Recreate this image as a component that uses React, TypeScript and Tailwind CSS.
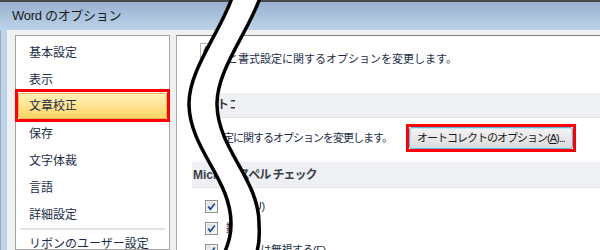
const jp = "font-['Liberation_Sans','Noto_Sans_CJK_JP',sans-serif]";

const items = ["基本設定", "表示", "文章校正", "保存", "文字体裁", "言語", "詳細設定"];

const Check = () => (
    <svg width="13" height="13" viewBox="0 0 13 13" className="shrink-0">
        <defs>
            <linearGradient id="cbg" x1="0" y1="0" x2="1" y2="1">
                <stop offset="0" stopColor="#dcdcdc" />
                <stop offset="1" stopColor="#fbfbfb" />
            </linearGradient>
        </defs>
        <rect x="0.5" y="0.5" width="12" height="12" fill="#f4f4f4" stroke="#8e8f8f" />
        <rect x="2" y="2" width="9" height="9" fill="url(#cbg)" />
        <path d="M3.2 6.6 L5.4 9.3 L9.8 3.4" fill="none" stroke="#2a4a9c" strokeWidth="1.7" />
    </svg>
);

const Wave = () => (
    <svg width="600" height="250" viewBox="0 0 600 250" className="absolute inset-0 pointer-events-none">
        <path
            d="M233,-5 C222,30 188,70 189,105 C190,150 232,180 231,225 C231,238 227,248 222,258 L255,258 C258,250 260,238 259,225 C260,180 218,150 217,105 C216,70 250,30 261,-5 Z"
            fill="#ffffff"
        />
        <path d="M233,-5 C222,30 188,70 189,105 C190,150 232,180 231,225 C231,238 227,248 222,258" fill="none" stroke="#000" strokeWidth="3.5" />
        <path d="M261,-5 C250,30 216,70 217,105 C218,150 260,180 259,225 C260,238 258,250 255,258" fill="none" stroke="#000" strokeWidth="3.5" />
    </svg>
);

export default function App() {
    return (
        <div className={`relative w-[600px] h-[250px] overflow-hidden bg-[#f0f0f0] ${jp}`}>
            {/* title bar */}
            <div className="h-[30px] border-t-2 border-[#4b4b4b] bg-gradient-to-b from-[#99b1cf] to-[#bdd3ea] flex items-center pl-[12px]">
                <span className="text-[13px] tracking-[-0.3px] text-[#1a1a1a]">Word のオプション</span>
            </div>

            <div className="flex h-[220px]">
                <div className="w-[7px] bg-[#bfd4ea] border-l border-[#9aa9bb]" />

                {/* category list */}
                <div className="ml-[8px] mt-[5px] w-[155px] border border-[#a3a3a3] bg-white pt-[3px] px-[2px] text-[12px] text-[#1d2d47]">
                    {items.map((t) =>
                        t === "文章校正" ? (
                            <div key={t} className="relative h-[27px]">
                                <div className="h-[26px] flex items-center pl-[10px] rounded-[2px] border border-[#e5b95a] bg-gradient-to-b from-[#fff1b8] to-[#fdd462]">
                                    {t}
                                </div>
                                <span className="absolute -left-[3px] -right-[3px] -top-[4px] -bottom-[2px] border-[3px] border-[#ff0000]" />
                            </div>
                        ) : (
                            <div key={t} className="h-[27px] flex items-center pl-[11px]">
                                {t}
                            </div>
                        )
                    )}
                    <div className="mx-[2px] h-[2px] bg-[#e3e3e3]" />
                    <div className="h-[27px] flex items-center pl-[11px]">リボンのユーザー設定</div>
                </div>

                {/* right panel */}
                <div className="ml-[6px] mt-[5px] flex-1 border-t border-l border-t-[#7d7d7d] border-l-[#a8a8a8] bg-white pl-[15px] pt-[7px] text-[#1d2d47]">
                    <div className="h-[50px] flex">
                        <div className="ml-[8px] w-[15px] h-[19px] border-l border-t border-[#b5b5b5] relative">
                            <span className="absolute left-[2px] top-[0px] text-[9px] font-bold leading-[10px] text-[#444]">A</span>
                            <span className="absolute left-[1px] bottom-[1px] w-[4px] h-[4px] rounded-full bg-[#3569c8]" />
                        </div>
                        <span className="ml-[12px] mt-[8px] leading-[16px] text-[11px] whitespace-nowrap">
                            と書式設定に関するオプションを変更します。
                        </span>
                    </div>

                    <div className="h-[25px] flex items-center bg-[#eef0f4] border-b border-[#e0e3e8]">
                        <span className="w-[43px] overflow-hidden whitespace-nowrap pl-[1px] text-[12px] font-bold text-[#3a3f48]">
                            オートコレクトのオプション
                        </span>
                    </div>

                    <div className="mt-[9px] h-[22px] flex items-center">
                        <span className="ml-[21px] w-[196px] whitespace-nowrap text-[11px] tracking-[-1px]">
                            設定に関するオプションを変更します。
                        </span>
                        <button className="relative w-[164px] h-[22px] rounded-[3px] border border-[#5fb4e0] bg-gradient-to-b from-[#f4f4f4] to-[#dcdcdc] text-[11px] tracking-[-1px] text-[#1a1a1a] shadow-[inset_0_0_0_1px_#c2e6f8]">
                            オートコレクトのオプション(<span className="underline">A</span>)...
                            <span className="absolute -left-[4px] -right-[4px] -top-[4px] -bottom-[4px] border-[3px] border-[#ff0000]" />
                        </button>
                    </div>

                    <div className="mt-[13px] h-[26px] flex items-center bg-[#eef0f4] border-b border-[#e0e3e8] text-[12px] font-bold text-[#3a3f48]">
                        <span className="w-[46px] overflow-hidden whitespace-nowrap pl-[1px]">Microsoft Office</span>
                        <span className="whitespace-nowrap tracking-[-1px]">スペル チェック</span>
                    </div>

                    <div className="mt-[7px] text-[11px]">
                        <div className="h-[22px] flex items-center">
                            <span className="ml-[13px]"><Check /></span>
                            <span className="ml-[8px] w-[24px] overflow-hidden whitespace-nowrap">すべて大文字の単語は無視する</span>
                            <span className="whitespace-nowrap">(U)</span>
                        </div>
                        <div className="h-[22px] flex items-center">
                            <span className="ml-[13px]"><Check /></span>
                            <span className="ml-[8px] w-[24px] overflow-hidden whitespace-nowrap">数字を含む単語は無視する(B)</span>
                        </div>
                        <div className="h-[22px] flex items-center">
                            <span className="ml-[13px]"><Check /></span>
                            <span className="ml-[8px] w-[24px] overflow-hidden whitespace-nowrap">インターネットとファイルのアドレ</span>
                            <span className="whitespace-nowrap tracking-[-0.5px]">スは無視する(F)</span>
                        </div>
                    </div>
                </div>
            </div>

            <Wave />
        </div>
    );
}
